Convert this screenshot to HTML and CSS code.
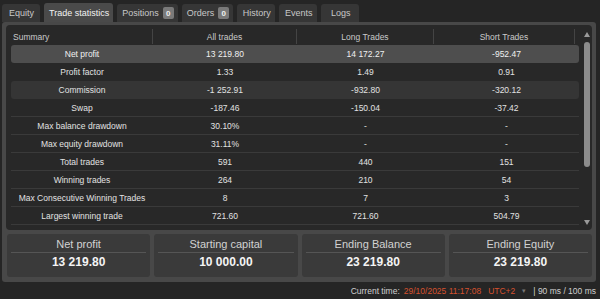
FILE: index.html
```html
<!DOCTYPE html>
<html>
<head>
<meta charset="utf-8">
<link rel="stylesheet" href="styles.css">
</head>
<body>
<div class="app">
  <nav class="tabs">
    <div class="tab">Equity</div>
    <div class="tab active">Trade statistics</div>
    <div class="tab">Positions <span class="badge">0</span></div>
    <div class="tab">Orders <span class="badge">0</span></div>
    <div class="tab">History</div>
    <div class="tab">Events</div>
    <div class="tab">Logs</div>
  </nav>
  <section class="panel">
    <div class="table-wrap">
      <div class="table">
        <div class="row head">
          <div class="cell left">Summary</div>
          <div class="cell">All trades</div>
          <div class="cell">Long Trades</div>
          <div class="cell">Short Trades</div>
        </div>
        <div class="row sel"><div class="cell">Net profit</div><div class="cell">13 219.80</div><div class="cell">14 172.27</div><div class="cell">-952.47</div></div>
        <div class="row"><div class="cell">Profit factor</div><div class="cell">1.33</div><div class="cell">1.49</div><div class="cell">0.91</div></div>
        <div class="row alt"><div class="cell">Commission</div><div class="cell">-1 252.91</div><div class="cell">-932.80</div><div class="cell">-320.12</div></div>
        <div class="row line"><div class="cell">Swap</div><div class="cell">-187.46</div><div class="cell">-150.04</div><div class="cell">-37.42</div></div>
        <div class="row line"><div class="cell">Max balance drawdown</div><div class="cell">30.10%</div><div class="cell">-</div><div class="cell">-</div></div>
        <div class="row line"><div class="cell">Max equity drawdown</div><div class="cell">31.11%</div><div class="cell">-</div><div class="cell">-</div></div>
        <div class="row line"><div class="cell">Total trades</div><div class="cell">591</div><div class="cell">440</div><div class="cell">151</div></div>
        <div class="row line"><div class="cell">Winning trades</div><div class="cell">264</div><div class="cell">210</div><div class="cell">54</div></div>
        <div class="row line"><div class="cell">Max Consecutive Winning Trades</div><div class="cell">8</div><div class="cell">7</div><div class="cell">3</div></div>
        <div class="row line"><div class="cell">Largest winning trade</div><div class="cell">721.60</div><div class="cell">721.60</div><div class="cell">504.79</div></div>
      </div>
      <div class="scrollbar">
        <span class="arrow up"></span>
        <span class="thumb"></span>
        <span class="arrow down"></span>
      </div>
    </div>
    <div class="cards">
      <div class="card"><div class="card-title">Net profit</div><div class="card-value">13 219.80</div></div>
      <div class="card"><div class="card-title">Starting capital</div><div class="card-value">10 000.00</div></div>
      <div class="card"><div class="card-title">Ending Balance</div><div class="card-value">23 219.80</div></div>
      <div class="card"><div class="card-title">Ending Equity</div><div class="card-value">23 219.80</div></div>
    </div>
  </section>
  <footer class="status">
    <span class="label">Current time:</span>
    <span class="red">29/10/2025 11:17:08</span>
    <span class="red tz">UTC+2</span>
    <span class="caret">&#9662;</span>
    <span class="label">| 90 ms / 100 ms</span>
  </footer>
</div>
</body>
</html>
```

FILE: styles.css
```css
* { box-sizing: border-box; }
html, body {
  margin: 0;
  padding: 0;
  background: #252525;
  font-family: "Liberation Sans", Arial, sans-serif;
  color: #dcdcdc;
}
.app {
  width: 600px;
  height: 299px;
  overflow: hidden;
}
.tabs {
  display: flex;
  align-items: flex-end;
  gap: 4px;
  height: 22px;
  padding-left: 2px;
}
.tab {
  display: flex;
  align-items: center;
  justify-content: center;
  gap: 4px;
  height: 18px;
  min-width: 38px;
  padding: 0 4px 0 5px;
  background: #363636;
  color: #c8c8c8;
  font-size: 9px;
  border-radius: 3px 3px 0 0;
}
.tab.active {
  height: 19px;
  background: #4a4a4a;
  color: #f2f2f2;
}
.badge {
  display: inline-flex;
  align-items: center;
  justify-content: center;
  width: 11px;
  height: 12px;
  background: #7a7a7a;
  color: #f0f0f0;
  font-size: 8px;
  font-weight: bold;
  border-radius: 2px;
}
.panel {
  width: 594px;
  margin-left: 2px;
  background: #484848;
  border-radius: 3px;
  padding: 3px 4px 5px 4px;
}
.table-wrap {
  display: flex;
  height: 205px;
  background: #282828;
  border-radius: 4px;
  padding: 3px 0 0 5px;
}
.table {
  width: 568px;
}
.row {
  display: grid;
  grid-template-columns: 142px 144px 137px 145px;
  height: 18px;
  font-size: 8.5px;
  color: #e2e2e2;
}
.row .cell {
  display: flex;
  align-items: center;
  justify-content: center;
  white-space: nowrap;
}
.row.head {
  height: 17px;
  color: #cacaca;
  grid-template-columns: 142px 144px 137px 141px 4px;
}
.row.head .cell {
  border-right: 1px solid #444;
  margin: 1px 0;
}
.row.head .cell.left {
  justify-content: flex-start;
  padding-left: 2px;
}
.row.sel {
  background: #4e4e4e;
  border-radius: 3px;
  color: #f0f0f0;
}
.row.alt {
  background: #353535;
  border-radius: 3px;
}
.row.line {
  border-bottom: 1px solid #3a3a3a;
}
.scrollbar {
  width: 13px;
  display: flex;
  flex-direction: column;
  align-items: center;
  padding: 3px 0 4px 2px;
}
.arrow {
  width: 0;
  height: 0;
  border-left: 3px solid transparent;
  border-right: 3px solid transparent;
}
.arrow.up {
  border-bottom: 5px solid #9a9a9a;
  margin-top: 1px;
}
.arrow.down {
  border-top: 5px solid #9a9a9a;
  margin-top: auto;
  margin-bottom: 1px;
}
.thumb {
  width: 6px;
  height: 125px;
  margin-top: 5px;
  background: #8c8c8c;
  border-radius: 3px;
}
.cards {
  display: grid;
  grid-template-columns: repeat(4, 1fr);
  gap: 4px;
  margin: 4px 0 0 1px;
}
.card {
  height: 43px;
  background: #3a3a3a;
  border-radius: 3px;
  padding: 3px 4px 0;
  text-align: center;
}
.card-title {
  height: 16px;
  line-height: 15px;
  font-size: 11px;
  color: #d2d2d2;
  border-bottom: 1px solid #555;
}
.card-value {
  line-height: 19px;
  font-size: 12px;
  font-weight: bold;
  color: #f4f4f4;
}
.status {
  display: flex;
  justify-content: flex-end;
  align-items: center;
  gap: 4px;
  height: 17px;
  padding-right: 4px;
  font-size: 8.5px;
  color: #d0d0d0;
}
.status .red {
  color: #d5512e;
}
.status .tz {
  margin-left: 3px;
}
.status .caret {
  color: #777;
  font-size: 7px;
  margin: 0 3px;
}
```
